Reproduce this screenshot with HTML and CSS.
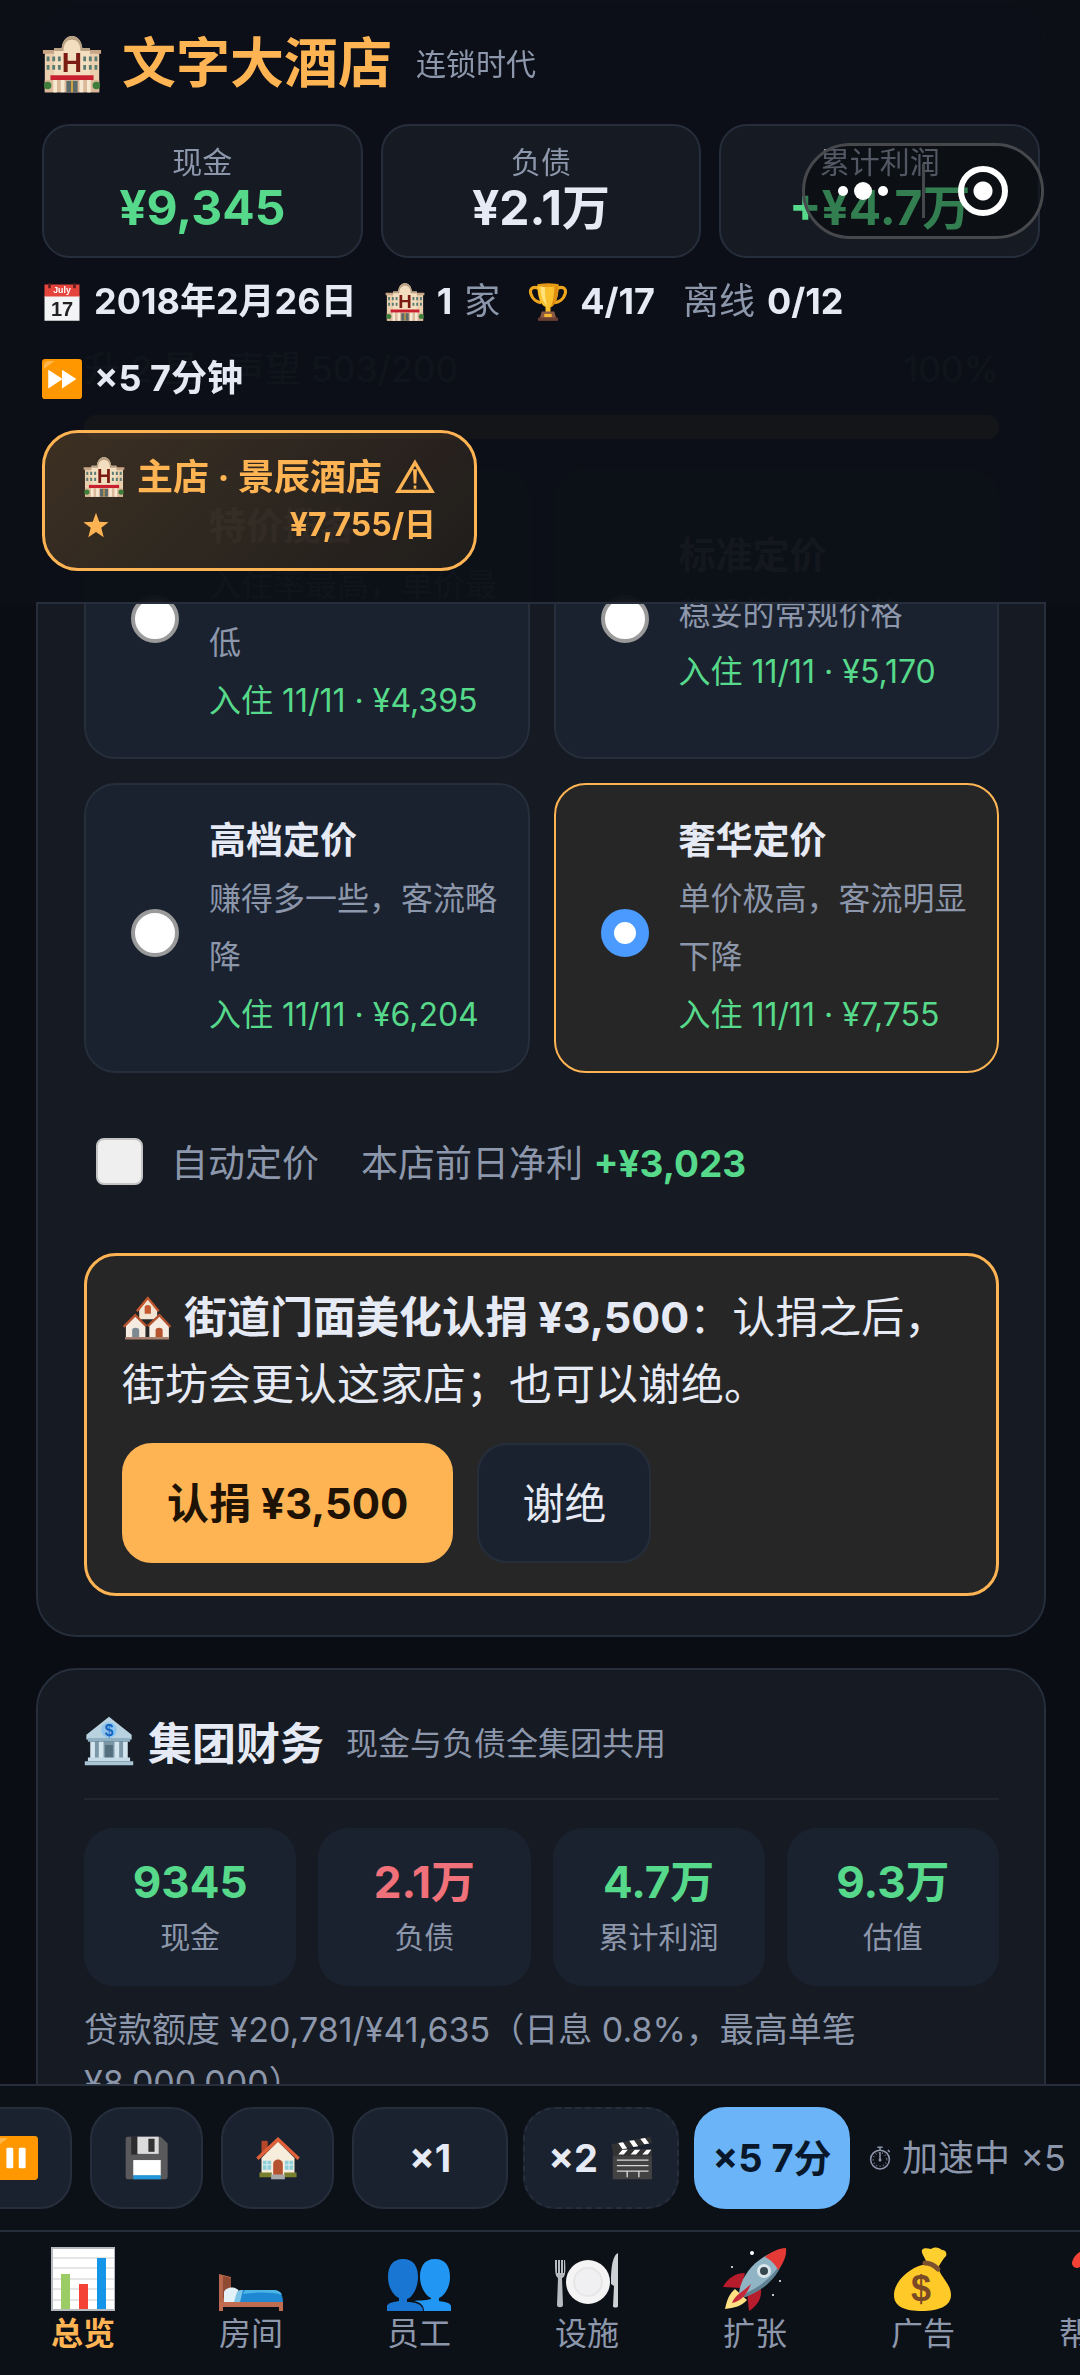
FILE: index.html
```html
<!DOCTYPE html>
<html lang="zh-CN">
<head>
  <meta charset="UTF-8">
  <meta name="viewport" content="width=device-width, initial-scale=1">
  <title>文字大酒店</title>
  <link rel="stylesheet" href="styles.css">
</head>
<body>
  <svg class="sprite" aria-hidden="true">
    <symbol id="i-hotel" viewBox="0 0 64 64">
      <path fill="#e9cfae" d="M3 20h12v42H3zM49 20h12v42H49z"/>
      <path fill="#c9a587" d="M1 17h15v4H1zM48 17h15v4H48z"/>
      <path fill="#f3dfc0" d="M13 15h8c1-9 6-13 11-13s10 4 11 13h8v47H13z"/>
      <path fill="#b9a184" d="M13 15h8c1-9 6-13 11-13s10 4 11 13h8v3H41C41 9 37 6 32 6s-9 3-9 12H13z"/>
      <path fill="#5b7a72" d="M5 24h3v5H5zm6 0h3v5h-3zM5 33h3v5H5zm6 0h3v5h-3zM50 24h3v5h-3zm6 0h3v5h-3zM50 33h3v5h-3zm6 0h3v5h-3zM17 24h3v5h-3zm0 9h3v5h-3zM44 24h3v5h-3zm0 9h3v5h-3z"/>
      <text x="32" y="41" text-anchor="middle" class="hotel-mark">H</text>
      <path fill="#c8202f" d="M9 44h46v5H9z"/>
      <path fill="#d9b99a" d="M3 49h58v13H3z"/>
      <path fill="#f7e8d2" d="M12 49h4v13h-4zM20 49h4v13h-4zM40 49h4v13h-4zM48 49h4v13h-4z"/>
      <path fill="#5d6a6c" d="M26 50h12v12H26z"/>
      <path fill="#d6a23c" d="M31 50h2v12h-2z"/>
      <circle cx="6" cy="55" r="4" fill="#3f7d3a"/><circle cx="58" cy="55" r="4" fill="#3f7d3a"/>
    </symbol>
    <symbol id="i-calendar" viewBox="0 0 64 64">
      <path fill="#f3f4f6" d="M4 22h56v40H4z"/>
      <path fill="#e5453c" d="M4 4h56v19H4z"/>
      <path fill="#5c1c1c" d="M10 2h4v8h-4zM50 2h4v8h-4z"/>
      <text x="32" y="18" text-anchor="middle" class="cal-month">July</text>
      <text x="32" y="54" text-anchor="middle" class="cal-day">17</text>
    </symbol>
    <symbol id="i-trophy" viewBox="0 0 64 64">
      <path fill="none" stroke="#f0a61c" stroke-width="5" d="M17 10C6 6 2 12 5 20c2 7 9 12 16 13M47 10c11-4 15 2 12 10-2 7-9 12-16 13"/>
      <path fill="#fbc02d" d="M15 4h34c0 18-4 32-13 36v8h-8v-8C19 36 15 22 15 4z"/>
      <path fill="#ffe27a" d="M20 6h7c0 14 1 24 4 32-8-6-11-18-11-32z"/>
      <path fill="#e08f12" d="M42 5h7c0 18-4 32-13 36 4-9 6-20 6-36z"/>
      <ellipse cx="32" cy="5" rx="17" ry="3" fill="#e59a17"/>
      <path fill="#8b5a44" d="M22 47h20l4 14H18z"/>
      <path fill="#6b4033" d="M16 57h32v5H16z"/>
      <path fill="#f5b82e" d="M26 51h12v5H26z"/>
    </symbol>
    <symbol id="i-forward" viewBox="0 0 64 64">
      <rect width="64" height="64" rx="5" fill="#ff9800"/>
      <path fill="#ffb74d" d="M3 12C3 6 6 3 12 3h8L3 16z"/>
      <path fill="#fff" d="M10 17l23 15-23 15zM32 17l23 15-23 15z"/>
    </symbol>
    <symbol id="i-pause" viewBox="0 0 64 64">
      <rect width="64" height="64" rx="5" fill="#ff9800"/>
      <path fill="#ffb74d" d="M3 12C3 6 6 3 12 3h8L3 16z"/>
      <rect x="18" y="17" width="10" height="30" rx="2" fill="#fff"/>
      <rect x="36" y="17" width="10" height="30" rx="2" fill="#fff"/>
    </symbol>
    <symbol id="i-warn" viewBox="0 0 64 64">
      <path fill="none" stroke="currentColor" stroke-width="5" d="M32 10L58 54H6z"/>
      <path fill="currentColor" d="M29 20h6l-1 22h-4zM30 45h4v5h-4z"/>
    </symbol>
    <symbol id="i-star" viewBox="0 0 64 64">
      <path fill="currentColor" d="M32 2l8 22 23 1-18 14 6 23-19-13-19 13 6-23L1 25l23-1z"/>
    </symbol>
    <symbol id="i-houses" viewBox="0 0 64 64">
      <path fill="#f2e4d3" d="M22 24L33 10l12 14v12H22z"/>
      <path fill="none" stroke="#c4592f" stroke-width="3" d="M19 26L33 9l14 17"/>
      <path fill="#c4592f" d="M29 21c0-4 8-4 8 0v8h-8z"/>
      <path fill="#f5ebe0" d="M5 44l12-12 13 12v17H5zM35 44l13-12 12 12v17H35z"/>
      <path fill="none" stroke="#b4532e" stroke-width="3" d="M2 46l15-15 14 14M33 45l15-14 14 15"/>
      <path fill="#7d8a94" d="M13 50c0-4 9-4 9 0v11h-9z"/>
      <path fill="#b4532e" d="M43 50c0-4 9-4 9 0v11h-9z"/>
      <path fill="#a77f6e" d="M4 59h56v3H4z"/>
    </symbol>
    <symbol id="i-bank" viewBox="0 0 64 64">
      <path fill="#b9d2df" d="M32 1l29 23v6H3v-6z"/>
      <path fill="#8fb0c2" d="M5 28h54v5H5z"/>
      <path fill="#7c98a8" d="M10 33h44v21H10z"/>
      <path fill="#d3e5ee" d="M8 33h6v21H8zM19 33h6v21h-6zM39 33h6v21h-6zM50 33h6v21h-6z"/>
      <path fill="#54707f" d="M27 37h10v17H27z"/>
      <path fill="#c5dce8" d="M5 53h54v5H5z"/>
      <path fill="#a9c5d4" d="M1 58h62v5H1z"/>
      <circle cx="32" cy="18" r="10" fill="#8ec5ee"/>
      <text x="32" y="25" text-anchor="middle" class="bank-mark">$</text>
    </symbol>
    <symbol id="i-disk" viewBox="0 0 64 64">
      <path fill="#5a5a5c" d="M4 1h48l10 10v48a4 4 0 0 1-4 4H4a3 3 0 0 1-3-3V4a3 3 0 0 1 3-3z"/>
      <path fill="#2c2c2e" d="M9 1h10v26H9z"/>
      <path fill="#dcdcdc" d="M18 1h31v25H18z"/>
      <path fill="#333" d="M34 4h9v19h-9z"/>
      <path fill="#fff" d="M12 35h40v23H12z"/>
      <path fill="#2196d8" d="M12 57h40v6H12z"/>
    </symbol>
    <symbol id="i-home" viewBox="0 0 64 64">
      <path fill="#b5482a" d="M8 7h9v18H8z"/>
      <path fill="#f7eddd" d="M8 32L32 8l24 24v27H8z"/>
      <path fill="none" stroke="#e0603a" stroke-width="5" d="M2 33L32 5l30 28"/>
      <path fill="#8fd0d8" d="M10 36h12v13H10zM42 36h12v13H42z"/>
      <path stroke="#fff" stroke-width="1" d="M16 36v13M10 42h12M48 36v13M42 42h12"/>
      <path fill="#b5522f" d="M25 41c0-9 14-9 14 0v16H25z"/>
      <path fill="#7a7f2e" d="M5 53h18v7H5zM41 53h18v7H41z"/>
      <path fill="#a7a9ab" d="M22 56h20v7H22z"/>
    </symbol>
    <symbol id="i-clapper" viewBox="0 0 64 64">
      <path fill="#424242" d="M4 28h57v35H4z"/>
      <path fill="#333" d="M2 12L59 1l2 9L4 22zM4 19h57v9H4z"/>
      <path fill="#fff" d="M12 10l7-1 6 9-7 1zM28 7l7-1 6 9-7 1zM44 4l7-1 6 8-7 1zM18 20h8l-6 7h-8zM36 20h8l-6 7h-8zM53 20h7l-5 7h-8z"/>
      <path stroke="#d8d8d8" stroke-width="2" d="M10 35h46M10 43h46M10 51h46M25 51v9M42 51v9"/>
    </symbol>
    <symbol id="i-timer" viewBox="0 0 64 64">
      <circle cx="32" cy="36" r="25" fill="none" stroke="currentColor" stroke-width="4"/>
      <circle cx="32" cy="36" r="18" fill="none" stroke="currentColor" stroke-width="4" stroke-dasharray="2 7"/>
      <path fill="none" stroke="currentColor" stroke-width="4" d="M32 16v22M25 3h14M32 3v8M53 11l5 5"/>
      <circle cx="32" cy="37" r="4" fill="currentColor"/>
    </symbol>
    <symbol id="i-chart" viewBox="0 0 64 64">
      <path fill="#b5babf" d="M0 0h64v64H0z"/>
      <path fill="#fff" d="M2 2h61v60H2z"/>
      <path stroke="#c9cdd1" stroke-width="1" d="M2 11h61M2 21h61M2 32h61M2 42h61M2 53h61"/>
      <path fill="#9ccc65" d="M10 27h9v35h-9z"/>
      <path fill="#f44336" d="M28 37h9v25h-9z"/>
      <path fill="#1495e8" d="M46 11h9v51h-9z"/>
    </symbol>
    <symbol id="i-bed" viewBox="0 0 64 64">
      <path fill="#b9674c" d="M0 27l12 3v26H4v8H0z"/>
      <path fill="#8f4a34" d="M4 29l8 2v20H4z"/>
      <path fill="#e3f1f8" d="M5 45c2-6 14-6 15 0h3v10H5z"/>
      <path fill="#7cc4e8" d="M18 45c1-2 4-2 6-2h6v12H15z"/>
      <path fill="#1e88d2" d="M24 43h32c5 1 8 5 8 12H21z"/>
      <path fill="#4db4e6" d="M26 43h30c4 1 6 2 7 5-10-3-24-3-39-1z"/>
      <path fill="#c06c50" d="M0 55h64v9h-4v-4H4v4H0z"/>
    </symbol>
    <symbol id="i-people" viewBox="0 0 64 64">
      <path fill="#1976d2" d="M16 12c11 0 15 8 15 18 0 11-6 21-11 22v3c8 0 16 2 16 9H0v-5c1-3 6-4 12-5v-3C7 49 1 41 1 30c0-10 4-18 15-18z"/>
      <path fill="#2196f3" d="M48 12c11 0 15 8 15 18 0 11-6 19-11 21v3c7 1 11 2 12 5v5H37c0-6-4-9-10-10 4-1 11 0 17-2v-1c-5-2-11-11-11-21 0-10 4-18 15-18z"/>
    </symbol>
    <symbol id="i-plate" viewBox="0 0 64 64">
      <circle cx="33" cy="35" r="22" fill="#f4f4f4"/>
      <circle cx="33" cy="35" r="15" fill="#e6e6e8"/>
      <circle cx="33" cy="35" r="13" fill="#f0f0f2"/>
      <path fill="#b8bcc0" d="M0 13h2v13h1V13h2v13h1V13h2v13h1V13h1c1 13 0 17-3 18l1 27c0 3-6 3-6 0l1-27c-3-2-3-7-3-18z"/>
      <path fill="#cfd2d5" d="M63 6v53c0 2-5 2-5 0l1-20-3-2c0-14 1-28 7-31z"/>
    </symbol>
    <symbol id="i-rocket" viewBox="0 0 64 64">
      <path fill="#ffe082" d="M12 42c-6 5-8 11-10 20 9-1 17-3 22-9z"/>
      <path fill="#b71c2c" d="M22 26C12 26 4 32 0 40l18 1zM38 42c1 10-4 17-12 22l-2-18z"/>
      <path fill="#90b4c4" d="M16 46c2-18 18-38 44-44 1 22-18 40-38 48z"/>
      <path fill="#5f8292" d="M60 12C56 30 40 44 22 50l-3-2C38 40 52 28 60 12z"/>
      <path fill="#e53935" d="M42 10c6-5 14-9 21-9 1 8-3 16-8 22-3-6-7-10-13-13z"/>
      <circle cx="41" cy="24" r="7" fill="#dbe6ec"/><circle cx="41" cy="24" r="4" fill="#37474f"/>
      <path fill="#c62839" d="M28 37l-7 6C14 48 11 51 9 56c9-2 14-7 19-19z"/>
      <circle cx="29" cy="6" r="2" fill="#fff"/><circle cx="9" cy="20" r="1" fill="#fff"/><circle cx="57" cy="34" r="1" fill="#fff"/><circle cx="50" cy="48" r="1" fill="#fff"/>
    </symbol>
    <symbol id="i-money" viewBox="0 0 64 64">
      <path fill="#fdd02f" d="M35 14c-2-5-5-8-4-11 3-3 6-1 9-1 5-3 8-1 11 1 4 0 5 3 4 6-3 3-6 8-8 12z"/>
      <path fill="#ffc928" d="M31 18c6-1 12 1 17 5 3 8 12 15 12 25 0 11-12 16-29 16S3 60 3 48c0-14 16-27 28-30z"/>
      <path fill="none" stroke="#7a5230" stroke-width="5" stroke-linecap="round" d="M34 16c5 0 9 2 13 6"/>
      <text x="30" y="54" text-anchor="middle" class="money-mark">$</text>
    </symbol>
    <symbol id="i-help" viewBox="0 0 64 64">
      <path fill="none" stroke="#f44336" stroke-width="10" stroke-linecap="round" d="M18 16c4-14 32-13 29 4-2 10-15 11-15 24"/>
      <circle cx="32" cy="57" r="6" fill="#f44336"/>
    </symbol>
  </svg>

  <header class="topbar">
    <div class="topbar-inner">
      <div class="brand">
        <svg class="brand-icon"><use href="#i-hotel"/></svg>
        <h1>文字大酒店</h1>
        <span class="era">连锁时代</span>
      </div>
      <div class="kpis">
        <div class="kpi"><span>现金</span><b class="up">¥9,345</b></div>
        <div class="kpi"><span>负债</span><b>¥2.1万</b></div>
        <div class="kpi"><span>累计利润</span><b class="up">+¥4.7万</b></div>
      </div>
      <div class="status">
        <span><svg><use href="#i-calendar"/></svg><b>2018年2月26日</b></span>
        <span><svg><use href="#i-hotel"/></svg><b>1</b> 家</span>
        <span><svg><use href="#i-trophy"/></svg><b>4/17</b></span>
        <span>离线 <b>0/12</b></span>
        <span><svg><use href="#i-forward"/></svg><b>×5 7分钟</b></span>
      </div>
      <button class="shop-chip">
        <span class="shop-name"><svg><use href="#i-hotel"/></svg>主店 · 景辰酒店<svg><use href="#i-warn"/></svg></span>
        <span class="shop-rate"><svg><use href="#i-star"/></svg><span>¥7,755/日</span></span>
      </button>
    </div>
  </header>

  <div class="capsule">
    <button aria-label="更多"><i class="dot"></i><i class="dot dot-big"></i><i class="dot"></i></button>
    <button aria-label="关闭"><i class="ring"></i></button>
  </div>

  <main class="content">
    <section class="panel panel-hotel">
      <div class="goal"><span>升 2 星 · 声望 503/200</span><span>100%</span></div>
      <div class="goal-bar"></div>

      <div class="prices">
        <label class="price">
          <input type="radio" name="price">
          <span class="price-text"><b>特价揽客</b><span>入住率最高，单价最低</span><em>入住 11/11 · ¥4,395</em></span>
        </label>
        <label class="price">
          <input type="radio" name="price">
          <span class="price-text"><b>标准定价</b><span>稳妥的常规价格</span><em>入住 11/11 · ¥5,170</em></span>
        </label>
        <label class="price">
          <input type="radio" name="price">
          <span class="price-text"><b>高档定价</b><span>赚得多一些，客流略降</span><em>入住 11/11 · ¥6,204</em></span>
        </label>
        <label class="price">
          <input type="radio" name="price" checked>
          <span class="price-text"><b>奢华定价</b><span>单价极高，客流明显下降</span><em>入住 11/11 · ¥7,755</em></span>
        </label>
      </div>

      <div class="auto">
        <label><input type="checkbox">自动定价</label>
        <span>本店前日净利 <b class="up">+¥3,023</b></span>
      </div>

      <div class="event">
        <p><svg><use href="#i-houses"/></svg> <b>街道门面美化认捐 ¥3,500</b>：认捐之后，街坊会更认这家店；也可以谢绝。</p>
        <div class="event-actions">
          <button class="btn btn-primary">认捐 ¥3,500</button>
          <button class="btn">谢绝</button>
        </div>
      </div>
    </section>

    <section class="panel">
      <h2><svg><use href="#i-bank"/></svg>集团财务<small>现金与负债全集团共用</small></h2>
      <div class="figures">
        <div><b class="up">9345</b><span>现金</span></div>
        <div><b class="down">2.1万</b><span>负债</span></div>
        <div><b class="up">4.7万</b><span>累计利润</span></div>
        <div><b class="up">9.3万</b><span>估值</span></div>
      </div>
      <p class="loan">贷款额度 ¥20,781/¥41,635（日息 0.8%，最高单笔 ¥8,000,000）</p>
    </section>
  </main>

  <div class="toolbar">
    <button class="tool" aria-label="暂停"><svg><use href="#i-pause"/></svg></button>
    <button class="tool" aria-label="存档"><svg><use href="#i-disk"/></svg></button>
    <button class="tool" aria-label="主页"><svg><use href="#i-home"/></svg></button>
    <div class="speeds">
      <button class="speed">×1</button>
      <button class="speed speed-ad">×2 <svg><use href="#i-clapper"/></svg></button>
      <button class="speed speed-on">×5 7分</button>
    </div>
    <span class="boost"><svg><use href="#i-timer"/></svg>加速中 ×5</span>
  </div>

  <nav class="tabs">
    <a href="#" class="active"><svg><use href="#i-chart"/></svg>总览</a>
    <a href="#"><svg><use href="#i-bed"/></svg>房间</a>
    <a href="#"><svg><use href="#i-people"/></svg>员工</a>
    <a href="#"><svg><use href="#i-plate"/></svg>设施</a>
    <a href="#"><svg><use href="#i-rocket"/></svg>扩张</a>
    <a href="#"><svg><use href="#i-money"/></svg>广告</a>
    <a href="#"><svg><use href="#i-help"/></svg>帮助</a>
  </nav>
</body>
</html>
```
FILE: styles.css
```css
:root {
  --bg: #0a0d14;
  --bar: #0c1017;
  --panel: #151a23;
  --card: #1b222f;
  --line: #262e3c;
  --text: #e6eaf4;
  --muted: #8d97ab;
  --accent: #ffb454;
  --green: #56d98a;
  --red: #f0717a;
}
* {
  box-sizing: border-box;
}
body {
  margin: 0;
  height: 100vh;
  display: flex;
  flex-direction: column;
  overflow: hidden;
  background: var(--bg);
  color: var(--text);
  font-family: Inter, "Noto Sans CJK SC", sans-serif;
  font-size: 36px;
}
h1, h2, p {
  margin: 0;
}
button {
  font: inherit;
  color: inherit;
  cursor: pointer;
}
.sprite {
  display: none;
}
.up {
  color: var(--green);
}
.down {
  color: var(--red);
}

/* text inside the icons */
.hotel-mark {
  font: bold 30px "Liberation Sans", sans-serif;
  fill: #7a1c12;
}
.cal-month {
  font: bold 14px "Liberation Sans", sans-serif;
  fill: #fff;
}
.cal-day {
  font: bold 32px "Liberation Sans", sans-serif;
  fill: #222;
}
.bank-mark {
  font: bold 20px "Liberation Sans", sans-serif;
  fill: #1565c0;
}
.money-mark {
  font: bold 36px "Liberation Sans", sans-serif;
  fill: #7a4a26;
}

/* top bar, lies over the scrolled content */
.topbar {
  position: fixed;
  top: 0;
  left: 0;
  right: 0;
  z-index: 2;
  background: rgba(12, 16, 23, 0.97);
}
.topbar-inner {
  margin: 0 34px 0 36px;
  padding: 28px 6px 31px;
  border-bottom: 2px solid var(--line);
}
.brand {
  display: flex;
  align-items: center;
  height: 72px;
  margin-bottom: 24px;
}
.brand-icon {
  width: 60px;
  height: 60px;
  margin-right: 20px;
}
.brand h1 {
  font-size: 54px;
  line-height: 72px;
  color: var(--accent);
}
.era {
  margin-left: 24px;
  padding-bottom: 4px;
  font-size: 30px;
  color: var(--muted);
}
.kpis {
  display: grid;
  grid-template-columns: repeat(3, 1fr);
  gap: 18px;
}
.kpi {
  display: flex;
  flex-direction: column;
  align-items: center;
  height: 134px;
  padding-top: 15px;
  background: var(--panel);
  border: 2px solid var(--line);
  border-radius: 28px;
}
.kpi span {
  font-size: 30px;
  line-height: 42px;
  color: var(--muted);
}
.kpi b {
  font-size: 48px;
  line-height: 50px;
}
.status {
  display: flex;
  flex-wrap: wrap;
  column-gap: 28px;
  margin: 5px 0 13px;
  color: var(--muted);
  font-size: 36px;
  line-height: 77px;
}
.status span {
  display: flex;
  align-items: center;
  gap: 12px;
}
.status b {
  color: var(--text);
}
.status svg {
  width: 40px;
  height: 40px;
}
.shop-chip {
  display: flex;
  flex-direction: column;
  justify-content: center;
  height: 141px;
  padding: 0 38px;
  background: linear-gradient(135deg, rgba(255, 180, 84, 0.2), rgba(255, 180, 84, 0.08));
  border: 3px solid var(--accent);
  border-radius: 36px;
  color: var(--accent);
  font-size: 36px;
  font-weight: bold;
}
.shop-name, .shop-rate {
  display: flex;
  align-items: center;
  align-self: stretch;
  gap: 12px;
  line-height: 48px;
}
.shop-name svg {
  width: 42px;
  height: 42px;
}
.shop-rate {
  justify-content: space-between;
  font-size: 32px;
}
.shop-rate svg {
  width: 26px;
  height: 26px;
}

/* host app buttons */
.capsule {
  position: fixed;
  top: 143px;
  right: 36px;
  z-index: 3;
  display: flex;
  align-items: center;
  width: 242px;
  height: 96px;
  background: rgba(0, 0, 0, 0.42);
  border: 3px solid #46484c;
  border-radius: 48px;
}
.capsule button {
  flex: 1;
  display: flex;
  align-items: center;
  justify-content: center;
  gap: 6px;
  height: 54px;
  padding: 0;
  background: none;
  border: 0;
}
.capsule button + button {
  border-left: 3px solid #46484c;
}
.dot {
  width: 10px;
  height: 10px;
  border-radius: 50%;
  background: #fff;
}
.dot-big {
  width: 18px;
  height: 18px;
}
.ring {
  width: 50px;
  height: 50px;
  border: 6px solid #fff;
  border-radius: 50%;
  background: radial-gradient(circle, #fff 9px, transparent 10px);
}

/* content */
.content {
  flex: 1;
  min-height: 0;
  overflow: hidden;
  padding: 0 34px 0 36px;
}
.panel {
  margin-bottom: 31px;
  padding: 39px 45px 39px 46px;
  background: var(--panel);
  border: 2px solid var(--line);
  border-radius: 40px;
}
.panel-hotel {
  padding-top: 340px;
}
.goal {
  display: flex;
  justify-content: space-between;
  font-size: 36px;
  line-height: 54px;
  color: var(--muted);
}
.goal-bar {
  height: 24px;
  margin: 19px 0 30px;
  border-radius: 12px;
  background: var(--accent);
}
.prices {
  display: grid;
  grid-template-columns: 1fr 1fr;
  gap: 24px;
}
.price {
  display: flex;
  align-items: center;
  min-height: 290px;
  padding: 24px 24px 24px 45px;
  background: var(--card);
  border: 2px solid var(--line);
  border-radius: 32px;
}
.price:has(:checked) {
  background: #262626;
  border-color: var(--accent);
}
.price input {
  appearance: none;
  flex: none;
  width: 48px;
  height: 48px;
  margin: 9px 30px 0 0;
  border: 4px solid #9a9a9a;
  border-radius: 50%;
  background: #fff;
}
.price input:checked {
  border: 13px solid #4a9aff;
}
.price-text {
  display: flex;
  flex-direction: column;
  font-size: 32px;
  line-height: 58px;
  color: var(--muted);
}
.price-text b {
  font-size: 37px;
  color: var(--text);
}
.price-text em {
  font-style: normal;
  color: var(--green);
}
.auto {
  display: flex;
  align-items: center;
  gap: 42px;
  height: 180px;
  padding: 0 0 4px 12px;
  font-size: 37px;
  color: var(--muted);
}
.auto label {
  display: flex;
  align-items: center;
  gap: 28px;
}
.auto input {
  appearance: none;
  width: 47px;
  height: 47px;
  margin: 0;
  border: 2px solid #c4c4c4;
  border-radius: 8px;
  background: #efefef;
}
.event {
  padding: 28px 30px 30px 35px;
  background: #262626;
  border: 3px solid var(--accent);
  border-radius: 32px;
  font-size: 43px;
  line-height: 67px;
}
.event svg {
  width: 50px;
  height: 50px;
  vertical-align: -8px;
}
.event-actions {
  display: flex;
  gap: 24px;
  margin-top: 25px;
}
.btn {
  height: 120px;
  padding: 0 43px;
  font-size: 42px;
  background: var(--card);
  border: 2px solid var(--line);
  border-radius: 30px;
}
.btn-primary {
  background: var(--accent);
  border-color: var(--accent);
  color: #1d1204;
  font-weight: bold;
}
h2 {
  display: flex;
  align-items: center;
  height: 91px;
  padding-bottom: 26px;
  margin-bottom: 28px;
  border-bottom: 2px solid #20262f;
  font-size: 44px;
}
h2 svg {
  width: 50px;
  height: 50px;
  margin-right: 14px;
}
h2 small {
  margin-left: 22px;
  font-size: 32px;
  font-weight: normal;
  color: var(--muted);
}
.figures {
  display: grid;
  grid-template-columns: repeat(4, 1fr);
  gap: 22px;
}
.figures div {
  display: flex;
  flex-direction: column;
  align-items: center;
  justify-content: center;
  height: 158px;
  background: var(--card);
  border-radius: 30px;
}
.figures b {
  font-size: 44px;
  line-height: 60px;
}
.figures span {
  font-size: 30px;
  line-height: 50px;
  color: var(--muted);
}
.loan {
  margin-top: 17px;
  font-size: 34px;
  line-height: 53px;
  color: var(--muted);
}

/* bottom bars */
.toolbar {
  display: flex;
  flex: none;
  align-items: center;
  gap: 18px;
  height: 146px;
  margin-left: -41px;
  overflow: hidden;
  white-space: nowrap;
  background: var(--bar);
  border-top: 2px solid var(--line);
}
.tool, .speed {
  display: flex;
  flex: none;
  align-items: center;
  justify-content: center;
  gap: 12px;
  width: 113px;
  height: 102px;
  padding: 0;
  background: var(--card);
  border: 2px solid var(--line);
  border-radius: 32px;
}
.tool svg, .speed svg {
  width: 44px;
  height: 44px;
}
.speeds {
  display: flex;
  gap: 15px;
}
.speed {
  width: 156px;
  font-size: 38px;
  line-height: 48px;
  font-weight: bold;
}
.speed-ad {
  border-style: dashed;
}
.speed-on {
  background: #6cb4f8;
  border-color: #6cb4f8;
  color: #08182a;
}
.boost {
  display: flex;
  align-items: center;
  gap: 10px;
  line-height: 48px;
  color: var(--muted);
}
.boost svg {
  width: 24px;
  height: 24px;
}
.tabs {
  display: flex;
  flex: none;
  height: 145px;
  margin-left: -1px;
  overflow: hidden;
  background: var(--bar);
  border-top: 2px solid var(--line);
}
.tabs a {
  display: flex;
  flex: none;
  flex-direction: column;
  align-items: center;
  width: 168px;
  padding-top: 15px;
  color: var(--muted);
  font-size: 32px;
  line-height: 46px;
  text-decoration: none;
}
.tabs svg {
  width: 64px;
  height: 64px;
}
.tabs .active {
  color: var(--accent);
  font-weight: bold;
}
```
